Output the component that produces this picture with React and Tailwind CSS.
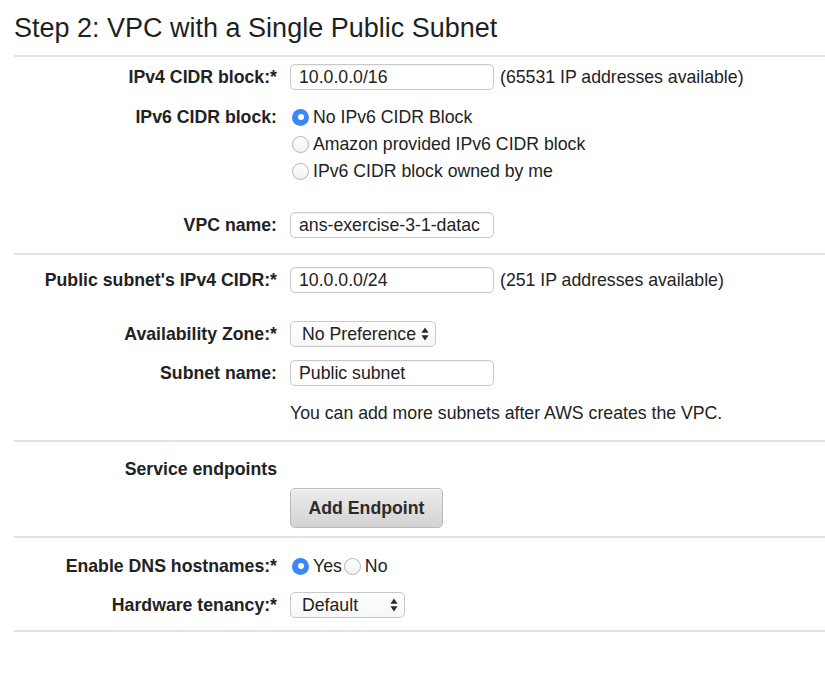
import { useState } from "react";

const font = { fontFamily: '"Liberation Sans", Arial, sans-serif' };

const Label = ({ children, required }) => (
  <div className="w-[290px] shrink-0 pr-[13px] text-right text-[17.7px] font-bold text-[#222]">
    {children}
    {required ? ":*" : ":"}
  </div>
);

const TextBox = ({ value, width = "w-[204px]" }) => (
  <div
    className={`${width} flex h-[26px] items-center overflow-hidden whitespace-nowrap rounded-[5px] border border-[#c9c9c9] bg-white pl-[8px] text-[17.7px] text-[#222] shadow-[inset_0_1px_1px_rgba(0,0,0,0.05)]`}
  >
    {value}
  </div>
);

const Arrows = () => (
  <svg width="8" height="14" viewBox="0 0 8 14" className="shrink-0">
    <path d="M4 0.5 L7.6 5.8 L0.4 5.8 Z" fill="#2a2a2a" />
    <path d="M4 13.5 L7.6 8.2 L0.4 8.2 Z" fill="#2a2a2a" />
  </svg>
);

const Select = ({ value, width }) => (
  <div
    className={`${width} flex h-[26px] items-center justify-between rounded-[5px] border border-[#c9c9c9] bg-gradient-to-b from-white to-[#f7f7f7] pl-[11px] pr-[6px] text-[17.7px] text-[#222]`}
  >
    <span>{value}</span>
    <Arrows />
  </div>
);

const Radio = ({ checked }) =>
  checked ? (
    <span className="flex h-[17px] w-[17px] shrink-0 items-center justify-center rounded-full bg-[#3a87f5]">
      <span className="block h-[6px] w-[6px] rounded-full bg-white" />
    </span>
  ) : (
    <span className="block h-[17px] w-[17px] shrink-0 rounded-full border border-[#b4b4b4] bg-gradient-to-b from-white to-[#f2f2f2]" />
  );

const RadioOption = ({ checked, label, onClick }) => (
  <button
    type="button"
    onClick={onClick}
    className="flex items-center gap-[4px] text-[17.7px] text-[#222]"
  >
    <span className="ml-[2px] flex">
      <Radio checked={checked} />
    </span>
    <span>{label}</span>
  </button>
);

const Divider = () => <div className="ml-[14px] h-[2px] bg-[#e2e2e2]" />;

const Row = ({ className = "", children }) => (
  <div className={`flex h-[26px] items-center ${className}`}>{children}</div>
);

const ipv6Options = [
  "No IPv6 CIDR Block",
  "Amazon provided IPv6 CIDR block",
  "IPv6 CIDR block owned by me",
];

export default function App() {
  const [ipv6, setIpv6] = useState(0);
  const [dns, setDns] = useState(true);

  return (
    <div className="min-h-[678px] w-[825px] bg-white" style={font}>
      <div className="h-[55px] pl-[14px] pt-[15px]">
        <h1 className="text-[27px] leading-[27px] text-[#1f1f1f]">
          Step 2: VPC with a Single Public Subnet
        </h1>
      </div>
      <Divider />

      <Row className="mt-[7px]">
        <Label required>IPv4 CIDR block</Label>
        <TextBox value="10.0.0.0/16" />
        <span className="ml-[6px] text-[17.7px] text-[#222]">
          (65531 IP addresses available)
        </span>
      </Row>

      <div className="mt-[14px] flex">
        <div className="flex h-[27px] items-center">
          <Label>IPv6 CIDR block</Label>
        </div>
        <div className="flex flex-col">
          {ipv6Options.map((opt, i) => (
            <div key={opt} className="flex h-[27px] items-center">
              <RadioOption
                checked={ipv6 === i}
                label={opt}
                onClick={() => setIpv6(i)}
              />
            </div>
          ))}
        </div>
      </div>

      <Row className="mt-[27px] mb-[15px]">
        <Label>VPC name</Label>
        <TextBox value="ans-exercise-3-1-datac" />
      </Row>
      <Divider />

      <Row className="mt-[12px]">
        <Label required>Public subnet's IPv4 CIDR</Label>
        <TextBox value="10.0.0.0/24" />
        <span className="ml-[6px] text-[17.7px] text-[#222]">
          (251 IP addresses available)
        </span>
      </Row>

      <Row className="mt-[28px]">
        <Label required>Availability Zone</Label>
        <Select value="No Preference" width="w-[146px]" />
      </Row>

      <Row className="mt-[13px]">
        <Label>Subnet name</Label>
        <TextBox value="Public subnet" />
      </Row>

      <Row className="mt-[14px] mb-[14px]">
        <div className="w-[290px] shrink-0" />
        <span className="text-[17.7px] text-[#222]">
          You can add more subnets after AWS creates the VPC.
        </span>
      </Row>
      <Divider />

      <Row className="mt-[14px]">
        <div className="w-[290px] shrink-0 pr-[13px] text-right text-[17.7px] font-bold text-[#222]">
          Service endpoints
        </div>
      </Row>

      <div className="mt-[6px] mb-[8px] flex">
        <div className="w-[290px] shrink-0" />
        <button
          type="button"
          className="h-[40px] w-[153px] rounded-[5px] border border-[#b9b9b9] bg-gradient-to-b from-[#ececec] to-[#d3d3d3] text-[17.7px] font-bold text-[#2b2b2b] shadow-[inset_0_1px_0_rgba(255,255,255,0.7)]"
        >
          Add Endpoint
        </button>
      </div>
      <Divider />

      <Row className="mt-[15px]">
        <Label required>Enable DNS hostnames</Label>
        <RadioOption checked={dns} label="Yes" onClick={() => setDns(true)} />
        <RadioOption checked={!dns} label="No" onClick={() => setDns(false)} />
      </Row>

      <Row className="mt-[13px] mb-[12px]">
        <Label required>Hardware tenancy</Label>
        <Select value="Default" width="w-[115px]" />
      </Row>
      <Divider />
    </div>
  );
}
